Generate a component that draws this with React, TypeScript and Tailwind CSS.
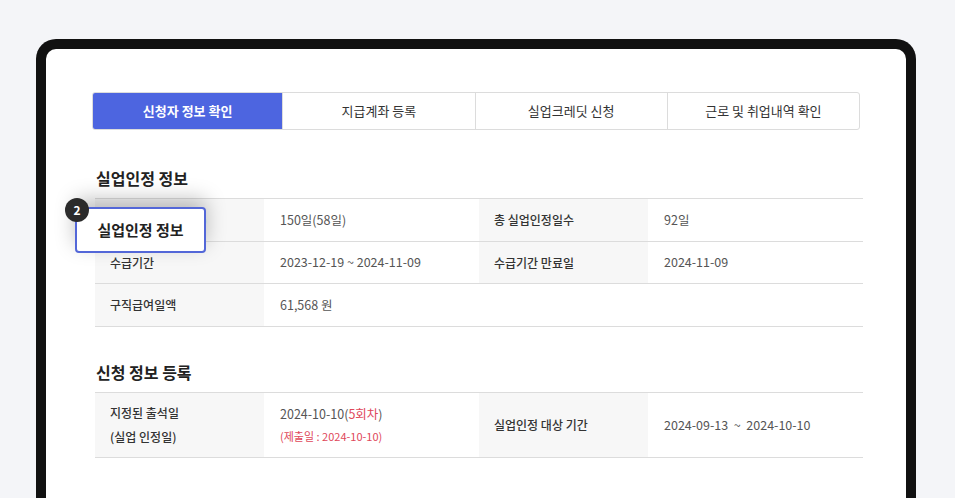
const tabs = ['신청자 정보 확인', '지급계좌 등록', '실업크레딧 신청', '근로 및 취업내역 확인']

function Label({ children, className = '' }: { children: React.ReactNode; className?: string }) {
  return (
    <div className={`w-[169px] shrink-0 bg-[#f7f7f7] pl-[15px] flex items-center text-[12px] font-medium text-[#333] ${className}`}>
      {children}
    </div>
  )
}

function Value({ children, className = '' }: { children: React.ReactNode; className?: string }) {
  return <div className={`flex items-center pl-[16px] text-[12.5px] text-[#555] ${className}`}>{children}</div>
}

export default function App() {
  return (
    <div
      className="relative h-[498px] overflow-hidden bg-[#f4f5f8] pt-[39px] pl-[36px]"
      style={{ fontFamily: '"Noto Sans CJK KR", "Noto Sans", sans-serif' }}
    >
      <div className="w-[880px] h-[480px] rounded-t-[20px] bg-[#111] px-[10px] pt-[10px]">
        <div className="h-full rounded-t-[10px] bg-white px-[46px] pt-[43px]">
          {/* tabs */}
          <div className="flex h-[38px] rounded-[3px] border border-[#dcdcdc] overflow-hidden">
            {tabs.map((t, i) => (
              <div
                key={t}
                className={
                  i === 0
                    ? 'flex-1 flex items-center justify-center bg-[#4d65e0] text-white text-[13px] font-bold -m-px'
                    : 'flex-1 flex items-center justify-center text-[13px] text-[#333] border-l border-[#dcdcdc] first:border-l-0'
                }
              >
                {t}
              </div>
            ))}
          </div>

          {/* 실업인정 정보 */}
          <div className="ml-[3px] -mr-[3px] mt-[37px]">
            <h2 className="text-[16px] leading-[22px] font-bold text-[#222] pl-[1px]">실업인정 정보</h2>
            <div className="mt-[9px] border-t border-[#dcdcdc]">
              <div className="flex h-[43px] border-b border-[#dcdcdc]">
                <Label>급여일수(잔여일수)</Label>
                <Value className="w-[215px]">150일(58일)</Value>
                <Label>총 실업인정일수</Label>
                <Value className="flex-1">92일</Value>
              </div>
              <div className="flex h-[42px] border-b border-[#dcdcdc]">
                <Label>수급기간</Label>
                <Value className="w-[215px]">2023-12-19 ~ 2024-11-09</Value>
                <Label>수급기간 만료일</Label>
                <Value className="flex-1">2024-11-09</Value>
              </div>
              <div className="flex h-[43px] border-b border-[#dcdcdc]">
                <Label>구직급여일액</Label>
                <Value className="flex-1">61,568 원</Value>
              </div>
            </div>
          </div>

          {/* 신청 정보 등록 */}
          <div className="ml-[3px] -mr-[3px] mt-[34px]">
            <h2 className="text-[16px] leading-[22px] font-bold text-[#222] pl-[1px]">신청 정보 등록</h2>
            <div className="mt-[9px] border-t border-[#dcdcdc]">
              <div className="flex h-[65px] border-b border-[#dcdcdc]">
                <Label className="flex-col !items-start justify-center leading-[24px]">
                  <span>지정된 출석일</span>
                  <span>(실업 인정일)</span>
                </Label>
                <div className="w-[215px] flex flex-col justify-center pl-[16px] leading-[22px]">
                  <span className="text-[12.5px] text-[#555]">
                    2024-10-10(<span className="text-[#e0485a]">5회차</span>)
                  </span>
                  <span className="text-[11px] text-[#e0485a]">(제출일 : 2024-10-10)</span>
                </div>
                <Label>실업인정 대상 기간</Label>
                <Value className="flex-1 whitespace-pre">2024-09-13  ~  2024-10-10</Value>
              </div>
            </div>
          </div>
        </div>
      </div>

      {/* callout */}
      <div className="absolute left-[75px] top-[207px] w-[131px] h-[46px] rounded-[4px] border-2 border-[#5367d8] bg-white shadow-[0_-8px_20px_rgba(0,0,0,0.25)] flex items-center justify-center">
        <span className="text-[15px] font-bold text-[#222]">실업인정 정보</span>
      </div>
      <div className="absolute left-[65px] top-[198px] w-[24px] h-[24px] rounded-full bg-[#2b2b2b] flex items-center justify-center text-white text-[12px] font-bold">
        2
      </div>
    </div>
  )
}
